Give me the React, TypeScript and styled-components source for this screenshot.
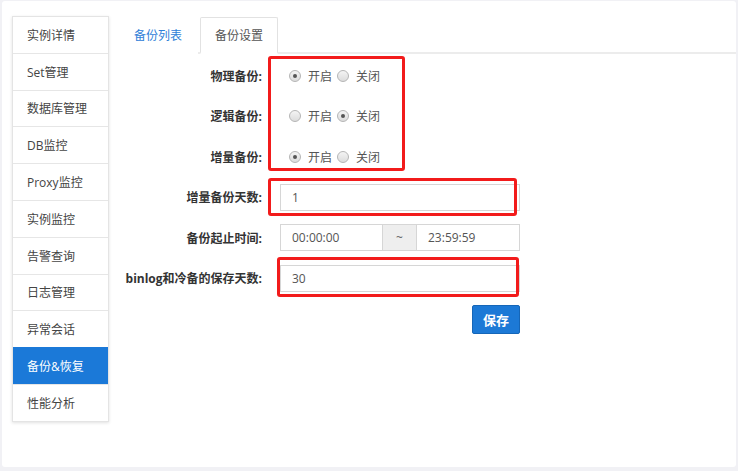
import React from "react";
import styled, { createGlobalStyle } from "styled-components";

const Global = createGlobalStyle`
  html, body { margin: 0; padding: 0; background: #f1f1f5; }
  body { font-family: "Open Sans", "Noto Sans CJK SC", sans-serif; font-size: 12px; color: #333; }
  * { box-sizing: border-box; }
`;

const Card = styled.div`
  margin: 1px 2px 0 2px;
  height: 466px;
  background: #fff;
  border-radius: 3px;
  display: flex;
  gap: 9px;
  padding: 15px 0 0 10px;
`;

const Sidebar = styled.ul`
  list-style: none;
  margin: 0;
  padding: 0;
  width: 97px;
  align-self: flex-start;
  background: #fff;
  box-shadow: 0 1px 3px rgba(0, 0, 0, 0.12);
  border: 1px solid #e4e4e4;
`;

const NavItem = styled.li<{ $active?: boolean }>`
  height: 36.8px;
  display: flex;
  align-items: center;
  padding-left: 14px;
  font-size: 12px;
  color: ${(p) => (p.$active ? "#fff" : "#444")};
  background: ${(p) => (p.$active ? "#1b79d8" : "#fff")};
  border-top: 1px solid ${(p) => (p.$active ? "#1b79d8" : "#e6e6e6")};
  &:first-child { border-top: none; height: 35.8px; }
`;

const Main = styled.div`
  flex: 1;
  display: flex;
  flex-direction: column;
`;

const TabBar = styled.div`
  display: flex;
  align-items: flex-end;
  height: 38px;
  border-bottom: 2px solid #ececec;
`;

const Tab = styled.div<{ $active?: boolean }>`
  height: 37px;
  margin-bottom: -2px;
  padding: 0 14px;
  margin-right: 2px;
  display: flex;
  align-items: center;
  font-size: 12px;
  color: ${(p) => (p.$active ? "#555" : "#2f80d8")};
  background: #fff;
  border: 1px solid ${(p) => (p.$active ? "#e2e2e2" : "transparent")};
  border-bottom: 2px solid ${(p) => (p.$active ? "#fff" : "transparent")};
  border-radius: 2px 2px 0 0;
  &:first-child { padding: 0 15px; }
`;

const Panel = styled.div`
  position: relative;
  padding-top: 8px;
`;

const Form = styled.div`
  display: grid;
  grid-template-columns: 144px 240px;
  grid-auto-rows: 27px;
  column-gap: 18px;
  row-gap: 13.6px;
  align-items: center;
`;

const Label = styled.div`
  text-align: right;
  font-weight: bold;
  font-size: 12px;
  color: #333;
`;

const RadioGroup = styled.div`
  display: flex;
  align-items: center;
  padding-left: 9px;
`;

const RadioCircle = styled.span<{ $checked?: boolean }>`
  width: 12px;
  height: 12px;
  border-radius: 50%;
  border: 1px solid #b5b5b5;
  background: linear-gradient(#f4f4f4, #dcdcdc);
  display: inline-flex;
  align-items: center;
  justify-content: center;
  &::after {
    content: "";
    width: 4px;
    height: 4px;
    border-radius: 50%;
    background: ${(p) => (p.$checked ? "#555" : "transparent")};
  }
`;

const RadioText = styled.span`
  margin: 0 5px 0 7px;
  color: #555;
  font-size: 12px;
`;

const Input = styled.div<{ $w?: number }>`
  height: 27px;
  width: ${(p) => (p.$w ? `${p.$w}px` : "100%")};
  border: 1px solid #d6d6d6;
  background: #fff;
  display: flex;
  align-items: center;
  padding-left: 11px;
  color: #555;
  font-size: 12px;
`;

const InputGroup = styled.div`
  display: flex;
`;

const Addon = styled.div`
  width: 33px;
  height: 27px;
  background: #eee;
  border: 1px solid #d6d6d6;
  border-left: none;
  border-right: none;
  display: flex;
  align-items: center;
  justify-content: center;
  color: #666;
`;

const ButtonCell = styled.div`
  grid-column: 2;
  display: flex;
  justify-content: flex-end;
`;

const Button = styled.button`
  height: 29px;
  width: 48px;
  background: #1c79d6;
  border: 1px solid #1566b8;
  border-radius: 2px;
  color: #fff;
  font-weight: bold;
  font-size: 13px;
  font-family: "Open Sans", "Noto Sans CJK SC", sans-serif;
  padding: 0;
`;

const Highlight = styled.div`
  position: absolute;
  border: 3px solid #f21b1b;
  border-radius: 3px;
  pointer-events: none;
`;

const nav = [
  "实例详情",
  "Set管理",
  "数据库管理",
  "DB监控",
  "Proxy监控",
  "实例监控",
  "告警查询",
  "日志管理",
  "异常会话",
  "备份&恢复",
  "性能分析",
];

const Radio = ({ on }: { on: boolean }) => (
  <RadioGroup>
    <RadioCircle $checked={on} />
    <RadioText>开启</RadioText>
    <RadioCircle $checked={!on} />
    <RadioText>关闭</RadioText>
  </RadioGroup>
);

export default function App() {
  return (
    <>
      <Global />
      <Card>
        <Sidebar>
          {nav.map((n) => (
            <NavItem key={n} $active={n === "备份&恢复"}>
              {n}
            </NavItem>
          ))}
        </Sidebar>
        <Main>
          <TabBar>
            <Tab>备份列表</Tab>
            <Tab $active>备份设置</Tab>
          </TabBar>
          <Panel>
            <Form>
              <Label>物理备份:</Label>
              <Radio on />
              <Label>逻辑备份:</Label>
              <Radio on={false} />
              <Label>增量备份:</Label>
              <Radio on />
              <Label>增量备份天数:</Label>
              <Input>1</Input>
              <Label>备份起止时间:</Label>
              <InputGroup>
                <Input $w={103}>00:00:00</Input>
                <Addon>~</Addon>
                <Input $w={104}>23:59:59</Input>
              </InputGroup>
              <Label>binlog和冷备的保存天数:</Label>
              <Input>30</Input>
              <ButtonCell>
                <Button>保存</Button>
              </ButtonCell>
            </Form>
            <Highlight style={{ left: 150, top: 2, width: 137, height: 115 }} />
            <Highlight style={{ left: 150, top: 124, width: 249, height: 38 }} />
            <Highlight style={{ left: 159, top: 203, width: 242, height: 40 }} />
          </Panel>
        </Main>
      </Card>
    </>
  );
}
